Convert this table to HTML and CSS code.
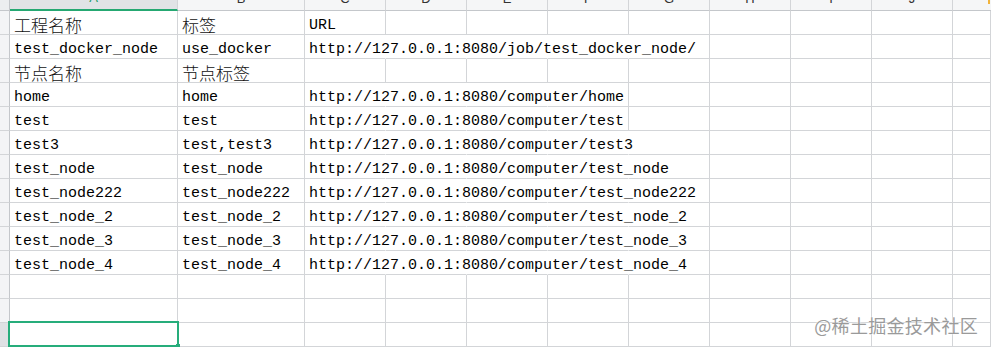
FILE: index.html
```html
<!DOCTYPE html>
<html lang="zh">
<head>
<meta charset="utf-8">
<title>Sheet</title>
<link rel="stylesheet" href="styles.css">
</head>
<body>
<div class="sheet">
  <div class="row head">
    <div class="corner"></div>
    <div class="ch sel"><span>A</span></div>
    <div class="ch"><span>B</span></div>
    <div class="ch"><span>C</span></div>
    <div class="ch"><span>D</span></div>
    <div class="ch"><span>E</span></div>
    <div class="ch"><span>F</span></div>
    <div class="ch"><span>G</span></div>
    <div class="ch"><span>H</span></div>
    <div class="ch"><span>I</span></div>
    <div class="ch"><span>J</span></div>
    <div class="ch last"><i class="mark"></i></div>
  </div>

  <div class="row">
    <div class="rh"></div>
    <div class="c zh">工程名称</div><div class="c zh">标签</div><div class="c">URL</div>
    <div class="c"></div><div class="c"></div><div class="c"></div><div class="c"></div><div class="c"></div><div class="c"></div><div class="c"></div><div class="c"></div>
  </div>
  <div class="row">
    <div class="rh"></div>
    <div class="c">test_docker_node</div><div class="c">use_docker</div><div class="c nr">http://127.0.0.1:8080/job/test_docker_node/</div>
    <div class="c nr"></div><div class="c nr"></div><div class="c nr"></div><div class="c"></div><div class="c"></div><div class="c"></div><div class="c"></div><div class="c"></div>
  </div>
  <div class="row">
    <div class="rh"></div>
    <div class="c zh">节点名称</div><div class="c zh">节点标签</div><div class="c"></div>
    <div class="c"></div><div class="c"></div><div class="c"></div><div class="c"></div><div class="c"></div><div class="c"></div><div class="c"></div><div class="c"></div>
  </div>
  <div class="row">
    <div class="rh"></div>
    <div class="c">home</div><div class="c">home</div><div class="c nr">http://127.0.0.1:8080/computer/home</div>
    <div class="c nr"></div><div class="c nr"></div><div class="c"></div><div class="c"></div><div class="c"></div><div class="c"></div><div class="c"></div><div class="c"></div>
  </div>
  <div class="row">
    <div class="rh"></div>
    <div class="c">test</div><div class="c">test</div><div class="c nr">http://127.0.0.1:8080/computer/test</div>
    <div class="c nr"></div><div class="c nr"></div><div class="c"></div><div class="c"></div><div class="c"></div><div class="c"></div><div class="c"></div><div class="c"></div>
  </div>
  <div class="row">
    <div class="rh"></div>
    <div class="c">test3</div><div class="c">test,test3</div><div class="c nr">http://127.0.0.1:8080/computer/test3</div>
    <div class="c nr"></div><div class="c nr"></div><div class="c nr"></div><div class="c"></div><div class="c"></div><div class="c"></div><div class="c"></div><div class="c"></div>
  </div>
  <div class="row">
    <div class="rh"></div>
    <div class="c">test_node</div><div class="c">test_node</div><div class="c nr">http://127.0.0.1:8080/computer/test_node</div>
    <div class="c nr"></div><div class="c nr"></div><div class="c nr"></div><div class="c"></div><div class="c"></div><div class="c"></div><div class="c"></div><div class="c"></div>
  </div>
  <div class="row">
    <div class="rh"></div>
    <div class="c">test_node222</div><div class="c">test_node222</div><div class="c nr">http://127.0.0.1:8080/computer/test_node222</div>
    <div class="c nr"></div><div class="c nr"></div><div class="c nr"></div><div class="c"></div><div class="c"></div><div class="c"></div><div class="c"></div><div class="c"></div>
  </div>
  <div class="row">
    <div class="rh"></div>
    <div class="c">test_node_2</div><div class="c">test_node_2</div><div class="c nr">http://127.0.0.1:8080/computer/test_node_2</div>
    <div class="c nr"></div><div class="c nr"></div><div class="c nr"></div><div class="c"></div><div class="c"></div><div class="c"></div><div class="c"></div><div class="c"></div>
  </div>
  <div class="row">
    <div class="rh"></div>
    <div class="c">test_node_3</div><div class="c">test_node_3</div><div class="c nr">http://127.0.0.1:8080/computer/test_node_3</div>
    <div class="c nr"></div><div class="c nr"></div><div class="c nr"></div><div class="c"></div><div class="c"></div><div class="c"></div><div class="c"></div><div class="c"></div>
  </div>
  <div class="row">
    <div class="rh"></div>
    <div class="c">test_node_4</div><div class="c">test_node_4</div><div class="c nr">http://127.0.0.1:8080/computer/test_node_4</div>
    <div class="c nr"></div><div class="c nr"></div><div class="c nr"></div><div class="c"></div><div class="c"></div><div class="c"></div><div class="c"></div><div class="c"></div>
  </div>
  <div class="row">
    <div class="rh"></div>
    <div class="c"></div><div class="c"></div><div class="c"></div>
    <div class="c"></div><div class="c"></div><div class="c"></div><div class="c"></div><div class="c"></div><div class="c"></div><div class="c"></div><div class="c"></div>
  </div>
  <div class="row">
    <div class="rh"></div>
    <div class="c"></div><div class="c"></div><div class="c"></div>
    <div class="c"></div><div class="c"></div><div class="c"></div><div class="c"></div><div class="c"></div><div class="c"></div><div class="c"></div><div class="c"></div>
  </div>
  <div class="row">
    <div class="rh cur"></div>
    <div class="c active"></div><div class="c"></div><div class="c"></div>
    <div class="c"></div><div class="c"></div><div class="c"></div><div class="c"></div><div class="c"></div><div class="c"></div><div class="c"></div><div class="c"></div>
  </div>

  <div class="watermark">@稀土掘金技术社区</div>
</div>
</body>
</html>
```

FILE: styles.css
```css
* { box-sizing: border-box; }
html, body {
  margin: 0;
  padding: 0;
  background: #ffffff;
  overflow: hidden;
}
.sheet {
  position: relative;
  width: 991px;
  height: 347px;
  overflow: hidden;
  font-family: "Liberation Mono", "Noto Sans CJK SC", monospace;
  font-size: 15px;
  color: #000000;
}
.row {
  display: grid;
  grid-template-columns: 10px 168px 127px repeat(8, 81px) 1fr;
  height: 24px;
}
.row.head { height: 11px; }

.corner {
  background: #eceef0;
  border-right: 1px solid #c4c7cb;
  border-bottom: 1px solid #c4c7cb;
}
.ch {
  background: #f5f6f7;
  border-right: 1px solid #d3d5d8;
  border-bottom: 1px solid #c4c7cb;
  display: flex;
  justify-content: center;
  align-items: flex-end;
  overflow: hidden;
  font-family: "Liberation Sans", Arial, sans-serif;
  font-size: 13px;
  color: #333;
}
.ch span {
  line-height: 12px;
  margin-bottom: 5px;
}
.ch.sel {
  background: #e1e3e6;
  border-bottom: 2px solid #25a872;
  color: #1e9b68;
}
.ch.last {
  border-right: 0;
  justify-content: flex-end;
  align-items: flex-start;
}
.mark {
  display: block;
  width: 2px;
  height: 4px;
  background: #f2b33a;
  margin-right: 1px;
}

.rh {
  background: #f3f4f6;
  border-right: 1px solid #c4c7cb;
  border-bottom: 1px solid #d3d5d8;
}
.rh.cur { background: #dfe1e4; }

.c {
  border-right: 1px solid #d3d5d8;
  border-bottom: 1px solid #d3d5d8;
  padding: 0 0 0 4px;
  display: flex;
  align-items: flex-end;
  white-space: nowrap;
  line-height: 16px;
  position: relative;
}
.c.nr { border-right-color: transparent; }
.c.zh {
  font-family: "Noto Sans CJK SC", sans-serif;
  font-size: 17px;
  font-weight: 300;
  line-height: 19px;
  color: #111;
}
.c.active::after {
  content: "";
  position: absolute;
  left: -2px;
  top: -2px;
  right: -2px;
  bottom: -1px;
  border: 2px solid #26ad7b;
}
.c.active::before {
  content: "";
  position: absolute;
  right: -3px;
  bottom: -1px;
  width: 4px;
  height: 3px;
  background: #26ad7b;
  z-index: 1;
}

.watermark {
  position: absolute;
  right: 13px;
  top: 312px;
  font-family: "Noto Sans CJK SC", sans-serif;
  font-size: 18px;
  color: #9a9a9a;
  letter-spacing: 0.3px;
  text-shadow: 0 0 2px #ffffff, 0 0 1px #ffffff;
}
```
